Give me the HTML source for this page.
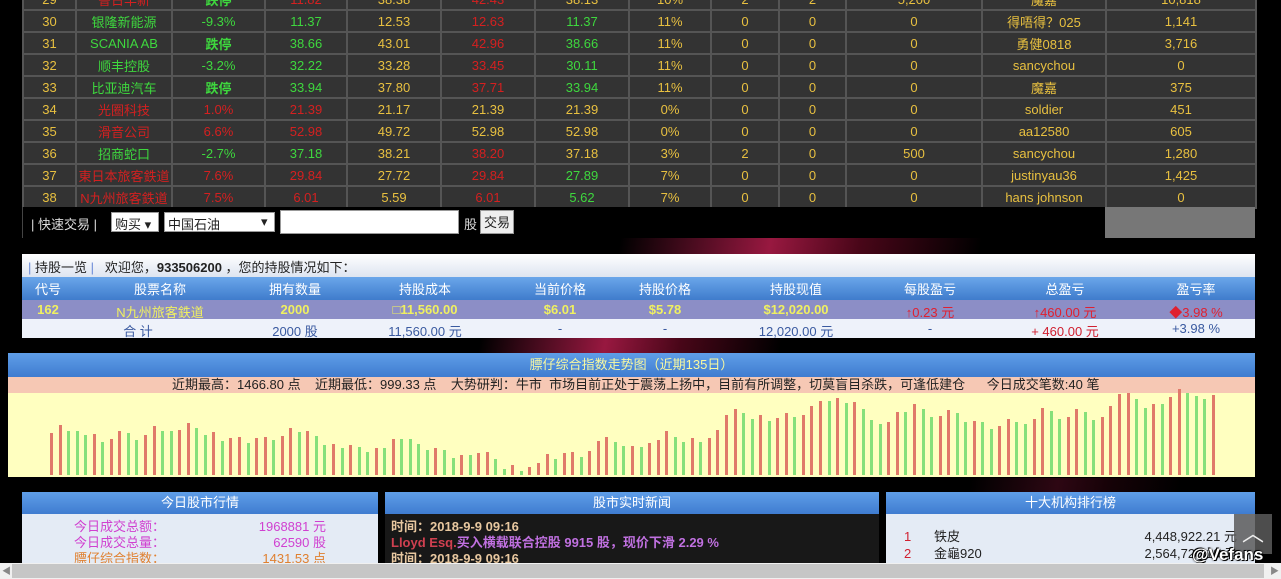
<!DOCTYPE html>
<html><head><meta charset="utf-8">
<style>
*{margin:0;padding:0;box-sizing:border-box}
body{width:1281px;height:579px;overflow:hidden;background:#000;font-family:"Liberation Sans","Noto Sans CJK SC",sans-serif;font-size:13px;position:relative}
.abs{position:absolute}
.streak{position:absolute;background:linear-gradient(100deg,transparent 0%,rgba(160,20,60,.0) 20%,rgba(190,30,80,.8) 45%,rgba(120,10,40,.6) 60%,transparent 80%)}
table{border-collapse:collapse}
#t{position:absolute;left:22px;top:-13px;width:1233px;background:#333;table-layout:fixed}
#t td{height:22px;border:2px solid #555;text-align:center;color:#e8c040;font-size:13px;white-space:nowrap;overflow:hidden}
.g{color:#3ed83e!important}.r{color:#d42020!important}.b{font-weight:bold}
#qt{left:22px;top:207px;width:1083px;height:31px;background:#000;color:#ddd;border-left:1px solid #444}
#qt span,#qt div{position:absolute}
.sel{background:#fff;color:#222;border:1px solid #999;height:20px;top:5px;font-size:13px;padding:1px 3px}
#hp{left:22px;top:254px;width:1233px;height:84px;background:#eef2f8}
#hp .tt{height:23px;background:linear-gradient(#fff,#dde4f0);color:#222;padding:3px 6px;font-size:13px}
.row{position:absolute;left:0;width:1233px;height:20px}
.row span{position:absolute;transform:translateX(-50%);white-space:nowrap;top:2px}
#ch{left:8px;top:353px;width:1247px;height:124px;background:#ffffc0}
.bh{background:linear-gradient(#5f9ee8,#3f7cd0);color:#fff;text-align:center;font-size:13px}
</style></head><body>
<div class="streak" style="left:500px;top:238px;width:600px;height:16px"></div>
<div class="streak" style="left:380px;top:338px;width:500px;height:15px"></div>
<div class="streak" style="left:900px;top:478px;width:350px;height:14px;opacity:.3"></div>

<table id="t">
<colgroup><col style="width:53px"><col style="width:96px"><col style="width:93px"><col style="width:82px"><col style="width:94px"><col style="width:94px"><col style="width:94px"><col style="width:82px"><col style="width:68px"><col style="width:67px"><col style="width:136px"><col style="width:124px"><col style="width:150px"></colgroup>
<tr><td>29</td><td class="r">鲁日丰新</td><td class="g b">跌停</td><td class="r">11.82</td><td>38.38</td><td class="r">42.43</td><td>38.13</td><td>10%</td><td>2</td><td>2</td><td>5,200</td><td>魔嘉</td><td>10,818</td></tr>
<tr><td>30</td><td class="g">银隆新能源</td><td class="g">-9.3%</td><td class="g">11.37</td><td>12.53</td><td class="r">12.63</td><td class="g">11.37</td><td>11%</td><td>0</td><td>0</td><td>0</td><td>得唔得？025</td><td>1,141</td></tr>
<tr><td>31</td><td class="g">SCANIA AB</td><td class="g b">跌停</td><td class="g">38.66</td><td>43.01</td><td class="r">42.96</td><td class="g">38.66</td><td>11%</td><td>0</td><td>0</td><td>0</td><td>勇健0818</td><td>3,716</td></tr>
<tr><td>32</td><td class="g">顺丰控股</td><td class="g">-3.2%</td><td class="g">32.22</td><td>33.28</td><td class="r">33.45</td><td class="g">30.11</td><td>11%</td><td>0</td><td>0</td><td>0</td><td>sancychou</td><td>0</td></tr>
<tr><td>33</td><td class="g">比亚迪汽车</td><td class="g b">跌停</td><td class="g">33.94</td><td>37.80</td><td class="r">37.71</td><td class="g">33.94</td><td>11%</td><td>0</td><td>0</td><td>0</td><td>魔嘉</td><td>375</td></tr>
<tr><td>34</td><td class="r">光圈科技</td><td class="r">1.0%</td><td class="r">21.39</td><td>21.17</td><td>21.39</td><td>21.39</td><td>0%</td><td>0</td><td>0</td><td>0</td><td>soldier</td><td>451</td></tr>
<tr><td>35</td><td class="r">滑音公司</td><td class="r">6.6%</td><td class="r">52.98</td><td>49.72</td><td>52.98</td><td>52.98</td><td>0%</td><td>0</td><td>0</td><td>0</td><td>aa12580</td><td>605</td></tr>
<tr><td>36</td><td class="g">招商蛇口</td><td class="g">-2.7%</td><td class="g">37.18</td><td>38.21</td><td class="r">38.20</td><td>37.18</td><td>3%</td><td>2</td><td>0</td><td>500</td><td>sancychou</td><td>1,280</td></tr>
<tr><td>37</td><td class="r">東日本旅客鉄道</td><td class="r">7.6%</td><td class="r">29.84</td><td>27.72</td><td class="r">29.84</td><td class="g">27.89</td><td>7%</td><td>0</td><td>0</td><td>0</td><td>justinyau36</td><td>1,425</td></tr>
<tr><td>38</td><td class="r">N九州旅客鉄道</td><td class="r">7.5%</td><td class="r">6.01</td><td>5.59</td><td class="r">6.01</td><td class="g">5.62</td><td>7%</td><td>0</td><td>0</td><td>0</td><td>hans johnson</td><td>0</td></tr>
</table>
<div class="abs" id="qt">
<span style="left:8px;top:7px">| 快速交易 |</span>
<div class="sel" style="left:88px;width:48px">购买 ▾</div>
<div class="sel" style="left:141px;width:111px">中国石油 <span style="left:96px;top:1px">▾</span></div>
<div class="sel" style="left:257px;width:179px;height:24px;top:3px"></div>
<span style="left:441px;top:7px">股</span>
<div class="sel" style="left:457px;width:34px;top:3px;height:24px;background:#eee">交易</div>
</div>
<div class="abs" style="left:1105px;top:207px;width:150px;height:31px;background:#777"></div>

<div class="abs" id="hp">
<div class="tt"><span style="color:#6a8ad8">|</span> 持股一览 <span style="color:#6a8ad8">|</span>&nbsp;&nbsp; 欢迎您，<b>933506200</b> ，您的持股情况如下：</div>
<div class="row bh" style="top:23px;height:23px;background:linear-gradient(#6aa6ea,#3f7ccc)"><span style="left:26px">代号</span><span style="left:138px">股票名称</span><span style="left:273px">拥有数量</span><span style="left:403px">持股成本</span><span style="left:538px">当前价格</span><span style="left:643px">持股价格</span><span style="left:774px">持股现值</span><span style="left:908px">每股盈亏</span><span style="left:1043px">总盈亏</span><span style="left:1174px">盈亏率</span></div>
<div class="row b" style="top:46px;height:19px;background:#8c8ec6;color:#f0f060"><span style="left:26px">162</span><span style="left:138px;font-weight:normal">N九州旅客鉄道</span><span style="left:273px">2000</span><span style="left:403px">□11,560.00</span><span style="left:538px">$6.01</span><span style="left:643px">$5.78</span><span style="left:774px">$12,020.00</span><span style="left:908px;color:#e02030;font-weight:normal">↑0.23 元</span><span style="left:1043px;color:#e02030;font-weight:normal">↑460.00 元</span><span style="left:1174px;color:#e02030;font-weight:normal">◆3.98 %</span></div>
<div class="row" style="top:65px;height:19px;background:#eef2fa;color:#3a5aa0"><span style="left:116px">合 计</span><span style="left:273px">2000 股</span><span style="left:403px">11,560.00 元</span><span style="left:538px">-</span><span style="left:643px">-</span><span style="left:774px">12,020.00 元</span><span style="left:908px">-</span><span style="left:1043px;color:#d02030">+ 460.00 元</span><span style="left:1174px">+3.98 %</span></div>
</div>

<div class="abs" id="ch">
<div class="bh" style="height:24px;line-height:24px;color:#f8f8a0">膘仔综合指数走势图（近期135日）</div>
<div style="height:16px;background:#f6c8b4;color:#222;font-size:13px;line-height:16px;padding-left:164px;white-space:nowrap">近期最高：1466.80 点 &nbsp;&nbsp; 近期最低：999.33 点 &nbsp;&nbsp; 大势研判：牛市 &nbsp;市场目前正处于震荡上扬中，目前有所调整，切莫盲目杀跌，可逢低建仓 &nbsp;&nbsp;&nbsp;&nbsp; 今日成交笔数:40 笔</div>
<div id="bars" style="position:relative;height:84px"></div>
</div>

<div class="abs" style="left:22px;top:492px;width:356px;height:71px;background:#e4ebf5">
<div class="bh" style="height:22px;line-height:22px">今日股市行情</div>
<div style="position:absolute;left:52px;top:27px;color:#d040d0;line-height:16px">今日成交总额：<br>今日成交总量：<br><span style="color:#e08030">膘仔综合指数：</span></div>
<div style="position:absolute;right:52px;top:27px;color:#d040d0;line-height:16px;text-align:right">1968881 元<br>62590 股<br><span style="color:#e08030">1431.53 点</span></div>
</div>
<div class="abs" style="left:385px;top:492px;width:494px;height:71px;background:#181818;overflow:hidden">
<div class="bh" style="height:22px;line-height:22px">股市实时新闻</div>
<div style="position:absolute;left:6px;top:27px;line-height:16px;font-size:13px;font-weight:bold;white-space:nowrap">
<span style="color:#e8c8a0">时间：2018-9-9 09:16</span><br>
<span style="color:#d04050">Lloyd Esq.</span><span style="color:#c070e0">买入横载联合控股 9915 股，现价下滑 2.29 %</span><br>
<span style="color:#e8c8a0">时间：2018-9-9 09:16</span></div>
</div>
<div class="abs" style="left:886px;top:492px;width:369px;height:71px;background:#e4ebf5">
<div class="bh" style="height:22px;line-height:22px">十大机构排行榜</div>
<div style="position:absolute;left:18px;top:36px;line-height:17px;color:#d02030">1<br>2</div>
<div style="position:absolute;left:48px;top:36px;line-height:17px;color:#222">铁皮<br>金龜920</div>
<div style="position:absolute;right:18px;top:36px;line-height:17px;color:#222;text-align:right">4,448,922.21 元<br>2,564,720.10 元</div>
</div>
<div class="abs" style="left:1234px;top:514px;width:38px;height:40px;background:rgba(90,90,90,.85);color:#eee;text-align:center;font-size:22px;line-height:40px">︿</div>
<div class="abs" style="left:1192px;top:545px;color:#fff;font-weight:bold;font-size:17px;text-shadow:0 0 2px #000,1px 1px 0 #000,-1px -1px 0 #000">@Vefans</div>
<div class="abs" style="left:0;top:563px;width:1281px;height:16px;background:#f0f0f0"><div style="position:absolute;left:12px;top:1px;width:1252px;height:14px;background:#c6c6c6"></div><span style="position:absolute;left:2px;top:1px;font-size:9px;color:#888">◀</span><span style="position:absolute;right:2px;top:1px;font-size:9px;color:#888">▶</span></div>

<script>
var L=[128,102,120,120,133,131,153,145,122,128,148,133,105,120,120,117,97,111,133,125,150,142,140,157,142,140,148,137,111,125,122,137,162,159,173,162,168,185,173,173,145,145,145,159,179,173,177,202,192,193,188,183,206,235,222,240,230,218,190,206,188,183,200,180,150,140,153,167,165,168];
var R=[168,160,133,150,165,153,165,153,130,85,68,80,97,85,102,93,78,90,85,57,42,42,33,50,45,68,100,111,105,75,75,53,68,90,87,70,80,107,102,105,128,117,97,105,113,97,65,73,97,90,68,75,99,90,57,23,18,37,65,53,53,30,7,20,28,38,24];
var h=[];L.forEach(function(t){h.push((253-t)/3)});R.forEach(function(t){h.push((253-t)/3+4)});
var s='',n=h.length,x0=42,step=(1212-50)/(n-1);
for(var i=0;i<n;i++){var c=(i==0||h[i]>h[i-1])?'#e07a6a':'#86e07a';var hh=Math.max(4,h[i]);
s+='<div style="position:absolute;left:'+Math.round(x0+i*step)+'px;bottom:2px;width:3px;height:'+Math.round(hh)+'px;background:'+c+'"></div>';}
document.getElementById('bars').innerHTML=s;
</script>
</body></html>
